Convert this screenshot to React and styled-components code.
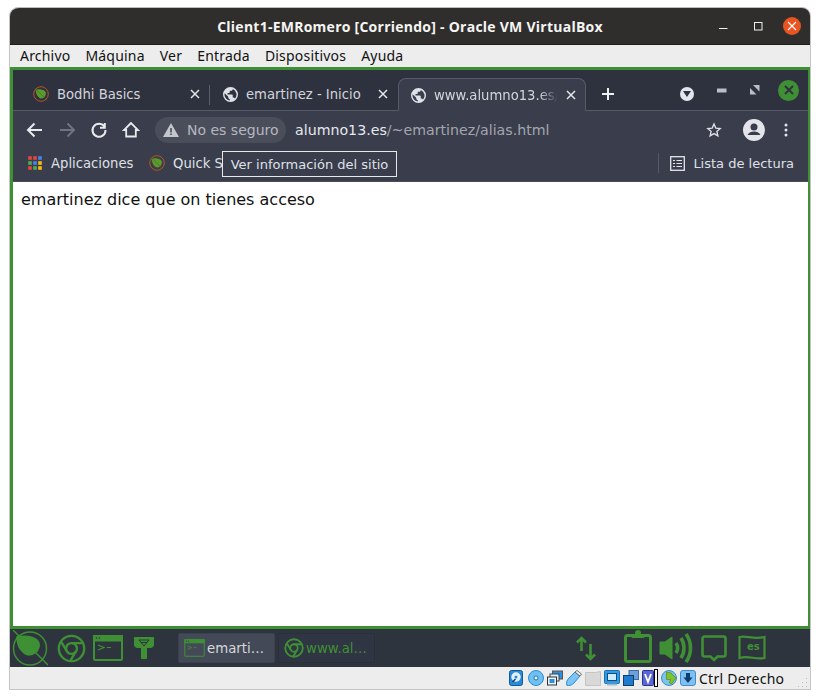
import React from 'react';
import styled, { createGlobalStyle } from 'styled-components';

const green = '#3f9035';

const GlobalStyle = createGlobalStyle`
  html, body { margin: 0; padding: 0; background: #ffffff; }
  body { font-family: "DejaVu Sans", sans-serif; }
`;

const Leaf = ({ size = 16 }) => (
  <svg width={size} height={size} viewBox="0 0 16 16">
    <circle cx="8" cy="8" r="7.3" fill="none" stroke="#b5561f" strokeWidth="1" />
    <path d="M2.600 3.800c3.400-1 8.200-.6 10 2.200 1 1.900-.6 5.500-3.300 6.300C5.600 13 3 8.800 2.600 3.800z" fill="#5d9a2c" />
    <path d="M1.500 2l13 12.500" stroke="#3d6b22" strokeWidth=".6" />
  </svg>
);

const Globe = () => (
  <svg width="15" height="15" viewBox="2 2 20 20">
    <path fill="#dfe1e8" d="M12 2a10 10 0 1 0 0 20 10 10 0 0 0 0-20zm-1 17.900A8 8 0 0 1 4.200 10.200L9 15v1c0 1.100.9 2 2 2v1.900zm6.900-2.500c-.3-.8-1-1.400-1.900-1.400h-1v-3c0-.6-.4-1-1-1H8v-2h2c.6 0 1-.4 1-1V7h2c1.100 0 2-.9 2-2v-.4a8 8 0 0 1 2.900 12.800z" />
  </svg>
);

const CloseX = () => (
  <svg width="10" height="10" viewBox="0 0 10 10">
    <path d="M1 1l8 8M9 1l-8 8" stroke="#e3e5ea" strokeWidth="1.500" />
  </svg>
);

const NavIcon = ({ d, color = '#e8eaed', width = 2 }) => (
  <svg width="20" height="20" viewBox="0 0 20 20">
    <path d={d} fill="none" stroke={color} strokeWidth={width} />
  </svg>
);

const AppsIcon = () => {
  const colors = ['#e8453c', '#e8453c', '#4285f4', '#4caf50', '#4285f4', '#fbbc05', '#e8453c', '#4caf50', '#fbbc05'];
  return (
    <svg width="14" height="14" viewBox="0 0 14 14">
      {colors.map((c, i) => (
        <rect key={i} x={(i % 3) * 5 + 0.2} y={Math.floor(i / 3) * 5 + 0.2} width="3.600" height="3.600" fill={c} />
      ))}
    </svg>
  );
};

const ChromeRing = ({ size, sw = 2.600 }) => (
  <svg width={size} height={size} viewBox="0 0 32 32" fill="none" stroke={green} strokeWidth={sw}>
    <circle cx="16" cy="16" r="14" />
    <circle cx="16" cy="16" r="6" />
    <path d="M16 10h13M10.800 19L4.500 8.500M21 19l-6.500 11" />
  </svg>
);

const TerminalIcon = ({ w, h, sw = 2 }) => (
  <svg width={w} height={h} viewBox="0 0 30 26" fill="none" stroke={green} strokeWidth={sw}>
    <rect x="1" y="1" width="28" height="24" rx="1" />
    <rect x="1" y="1" width="28" height="4.500" fill={green} />
    <circle cx="3.500" cy="3" r=".8" fill="#2e343e" stroke="none" />
    <circle cx="6.500" cy="3" r=".8" fill="#2e343e" stroke="none" />
    <path d="M5 10l6 2.500-6 2.500M14 12.500h4" strokeWidth="1.200" />
  </svg>
);

const Tabs = [
  { title: 'Bodhi Basics', icon: <Leaf />, pad: 10 },
  { title: 'emartinez - Inicio', icon: <Globe />, pad: 11 },
  { title: 'www.alumno13.es/~emartinez/alias.html', icon: <Globe />, pad: 11, active: true },
];

const App = () => (
  <>
    <GlobalStyle />
    <Page>
      <Window>
        <TitleBar>
          <Title>Client1-EMRomero [Corriendo] - Oracle VM VirtualBox</Title>
          <WindowControls>
            <MinimizeLine>
              <svg width="10" height="10" viewBox="0 0 10 10"><path d="M0 7.500h8.500" stroke="#f0efec" strokeWidth="1" /></svg>
            </MinimizeLine>
            <svg width="10" height="10" viewBox="0 0 10 10"><rect x="1.500" y="1.500" width="7.500" height="7.500" fill="none" stroke="#f0efec" strokeWidth="1" /></svg>
            <CloseCircle>
              <svg width="10" height="10" viewBox="0 0 10 10"><path d="M1 1l8 8M9 1l-8 8" stroke="#fff" strokeWidth="1.100" /></svg>
            </CloseCircle>
          </WindowControls>
        </TitleBar>
        <MenuBar>
          {['Archivo', 'Máquina', 'Ver', 'Entrada', 'Dispositivos', 'Ayuda'].map((m) => (
            <MenuItem key={m}>{m}</MenuItem>
          ))}
        </MenuBar>
        <Guest>
          <TabStrip>
            {Tabs.map((t, i) => (
              <Tab key={t.title} $active={t.active} $divider={i === 0} $pad={t.pad}>
                <TabIcon>{t.icon}</TabIcon>
                <TabTitle $active={t.active}>{t.title}</TabTitle>
                <TabClose><CloseX /></TabClose>
              </Tab>
            ))}
            <NewTab>
              <svg width="14" height="14" viewBox="0 0 14 14"><path d="M7 1v12M1 7h12" stroke="#eef0f4" strokeWidth="2" /></svg>
            </NewTab>
            <StripControls>
              <DownCircle>
                <svg width="8" height="6" viewBox="0 0 8 6"><path d="M0 0h8L4 6z" fill="#2f3340" /></svg>
              </DownCircle>
              <svg width="10" height="5" viewBox="0 0 10 5"><rect width="9.500" height="4" y=".5" fill="#bcbec6" /></svg>
              <svg width="10" height="10" viewBox="0 0 10 10"><path d="M3 0h6.500v6.500zM0 3l6.500 6.500H0z" fill="#bcbec6" /></svg>
              <GreenClose>
                <svg width="10" height="10" viewBox="0 0 10 10"><path d="M1 1l8 8M9 1l-8 8" stroke="#2f3340" strokeWidth="2" /></svg>
              </GreenClose>
            </StripControls>
          </TabStrip>
          <Toolbar>
            <NavButton><NavIcon d="M17 10H4M9.500 3.500L3 10l6.500 6.500" /></NavButton>
            <NavButton><NavIcon d="M3 10h13M10.500 3.500L17 10l-6.500 6.500" color="#71747f" /></NavButton>
            <NavButton><NavIcon d="M15.300 6.500A6.500 6.500 0 1 0 16.500 10M15.800 3v4.800H11" /></NavButton>
            <NavButton><NavIcon d="M10 3L3 10h2.200v6.500h9.600V10H17z" width={1.800} /></NavButton>
            <SecurityPill>
              <svg width="16" height="14" viewBox="0 0 16 14">
                <path d="M8 0l8 14H0z" fill="#c4c6cc" />
                <path d="M7.200 5h1.600v4.500H7.200zM7.200 10.500h1.600V12H7.200z" fill="#4a4e5b" />
              </svg>
              <PillText>No es seguro</PillText>
            </SecurityPill>
            <Url>alumno13.es<UrlRest>/~emartinez/alias.html</UrlRest></Url>
            <ToolbarRight>
              <svg width="16" height="16" viewBox="0 0 24 24"><path d="M12 3l2.700 6.100 6.600.7-5 4.400 1.500 6.500L12 17.400l-5.800 3.300 1.500-6.500-5-4.400 6.600-.7z" fill="none" stroke="#dfe1e6" strokeWidth="2" /></svg>
              <Avatar>
                <svg width="22" height="22" viewBox="0 0 22 22">
                  <circle cx="11" cy="11" r="11" fill="#e3e5ea" />
                  <circle cx="11" cy="8" r="3.500" fill="#3a3d4b" />
                  <path d="M4.500 16c1-2.500 4-3.500 6.500-3.500s5.500 1 6.500 3.500z" fill="#3a3d4b" />
                </svg>
              </Avatar>
              <svg width="4" height="14" viewBox="0 0 4 14" fill="#e3e5ea"><circle cx="2" cy="2" r="1.500" /><circle cx="2" cy="7" r="1.500" /><circle cx="2" cy="12" r="1.500" /></svg>
            </ToolbarRight>
          </Toolbar>
          <BookmarkBar>
            <Bookmark $width={121} $gap={9}><AppsIcon /><span>Aplicaciones</span></Bookmark>
            <Bookmark $width={74} $gap={8}><Leaf /><span>Quick S</span></Bookmark>
            <Tooltip>Ver información del sitio</Tooltip>
            <ReadingList>
              <svg width="15" height="15" viewBox="0 0 15 15" fill="none" stroke="#e3e5ea">
                <rect x=".7" y=".7" width="13.600" height="13.600" strokeWidth="1.300" />
                <path d="M3 4.500h2M6.500 4.500H12M3 7.500h2M6.500 7.500H12M3 10.500h2M6.500 10.500H12" strokeWidth="1.200" />
              </svg>
              <span>Lista de lectura</span>
            </ReadingList>
          </BookmarkBar>
          <Content>emartinez dice que on tienes acceso</Content>
          <GreenLine />
        </Guest>
        <BodhiPanel>
          <PanelIcon $margin="0 9px 0 2px">
            <svg width="36" height="36" viewBox="0 0 36 36" fill="none" stroke={green} strokeWidth="1.500">
              <circle cx="18" cy="18.500" r="16.500" />
              <path d="M5 7c6-1 15-1 20 3 4 4 2 10-2 13-3 2-8 3-11 0C7 19 5 13 5 7z" fill={green} />
              <path d="M1 0l35 35" />
            </svg>
          </PanelIcon>
          <PanelIcon $margin="0 7px 0 0"><ChromeRing size={29} /></PanelIcon>
          <PanelIcon $margin="0 11px 0 0"><TerminalIcon w={30} h={26} /></PanelIcon>
          <PanelIcon $margin="0 24px 0 0">
            <svg width="20" height="22" viewBox="0 0 20 22">
              <path d="M0 1a1 1 0 0 1 1-1h18a1 1 0 0 1 1 1v7a4 4 0 0 1-4 3h-3v9a2 2 0 0 1-6 0v-9H4a4 4 0 0 1-4-3z" fill={green} />
              <path d="M5 3h10L10 9zM7 5.500h6" fill="none" stroke="#2e343e" strokeWidth="1" />
            </svg>
          </PanelIcon>
          <TaskButton $active>
            <TerminalIcon w={21} h={18} sw={1.500} />
            <TaskLabel $active>emarti…</TaskLabel>
          </TaskButton>
          <TaskButton>
            <ChromeRing size={20} sw={3} />
            <TaskLabel>www.al…</TaskLabel>
          </TaskButton>
          <PanelRight>
            <PanelIcon $margin="0 28px 0 0">
              <svg width="20" height="25" viewBox="0 0 20 25" fill="none" stroke={green} strokeWidth="2.600">
                <path d="M5.500 15V2M1 6.500l4.500-4.500 4.500 4.500M14.500 8v15M10 18.500l4.500 4.500 4.500-4.500" />
              </svg>
            </PanelIcon>
            <PanelIcon $margin="0 7px 3px 0">
              <svg width="28" height="33" viewBox="0 0 28 33" fill="none" stroke={green} strokeWidth="3">
                <rect x="1.500" y="5.500" width="25" height="26" rx="2" />
                <path d="M8 4.500h12v3H8z" fill={green} strokeWidth="1" />
                <circle cx="14" cy="3" r="3" fill={green} stroke="none" />
              </svg>
            </PanelIcon>
            <PanelIcon $margin="0 8px 0 0">
              <svg width="34" height="32" viewBox="0 0 34 32" fill="none" stroke={green} strokeWidth="3.600">
                <path d="M1 10h5l7-5v22l-7-5H1z" fill={green} strokeWidth="1" />
                <path d="M17 11c2 3 2 7 0 10M22 6c4 6 4 14 0 20M27 2c6 8 6 20 0 28" />
              </svg>
            </PanelIcon>
            <PanelIcon $margin="0 11px 0 0">
              <svg width="26" height="27" viewBox="0 0 26 27" fill="none" stroke={green} strokeWidth="2.600">
                <path d="M3.500 1.500h19a2 2 0 0 1 2 2v16a2 2 0 0 1-2 2h-6L13 25l-3.500-3.500h-6a2 2 0 0 1-2-2v-16a2 2 0 0 1 2-2z" />
              </svg>
            </PanelIcon>
            <FlagIcon>
              <svg width="28" height="28" viewBox="0 0 28 28" fill="none" stroke={green} strokeWidth="2.200">
                <path d="M1.500 3c7-2 13 3 25 0v21c-9 2-16-3-25 0z" />
              </svg>
              <FlagText>es</FlagText>
            </FlagIcon>
          </PanelRight>
        </BodhiPanel>
        <StatusBar>
          <StatusIcons>
            <StatusSlot>
              <svg width="14" height="16" viewBox="0 0 14 16"><rect x=".5" y=".5" width="13" height="15" rx="2" fill="#2a8ad4" stroke="#0b5b9e" /><circle cx="7" cy="7" r="4.700" fill="#e4f1fb" /><circle cx="7" cy="7" r="1.500" fill="#2a8ad4" /><path d="M3.500 12l3-3" stroke="#0b3e6e" strokeWidth="1.500" /></svg>
            </StatusSlot>
            <StatusSlot>
              <svg width="16" height="16" viewBox="0 0 16 16"><circle cx="8" cy="8" r="7.500" fill="#6fc0f2" stroke="#2d8dcc" /><circle cx="8" cy="8" r="2" fill="#fff" stroke="#1d6fb0" /></svg>
            </StatusSlot>
            <StatusSlot>
              <svg width="16" height="16" viewBox="0 0 16 16"><rect x="5.500" y="1" width="10" height="8" fill="#2f8fdc" stroke="#555" /><rect x="3" y="4" width="9" height="7" fill="#d9ecfa" stroke="#444" /><rect x=".5" y="7" width="9" height="8" fill="#eaf4fc" stroke="#333" /><rect x="2.500" y="9" width="5" height="4" fill="#2f8fdc" /></svg>
            </StatusSlot>
            <StatusSlot>
              <svg width="16" height="16" viewBox="0 0 16 16"><path d="M.8 15.300c-.8-3 .2-5.300 2.200-7.300l6-6 5 4-6 7c-2 2-5 3.300-7.200 2.300z" fill="#7cc4f5" stroke="#2d8dcc" /><path d="M9 2l2-1.500 4.500 3.500-1.500 2z" fill="#f4f4f4" stroke="#555" strokeWidth=".8" /></svg>
            </StatusSlot>
            <StatusSlot>
              <svg width="16" height="16" viewBox="0 0 16 16"><path d="M.5 2.500h10l5-1v14H.5z" fill="#d8d8d8" stroke="#c4c4c4" /></svg>
            </StatusSlot>
            <StatusSlot>
              <svg width="16" height="16" viewBox="0 0 16 16"><rect x=".5" y=".5" width="15" height="13" rx="1" fill="#2f9be6" stroke="#1f6fae" /><rect x="3.500" y="3.500" width="9" height="7" fill="#cfeafd" stroke="#0d4e85" /><rect x="3" y="13.500" width="10" height="2" fill="#9cb7cc" /></svg>
            </StatusSlot>
            <StatusSlot>
              <svg width="16" height="16" viewBox="0 0 16 16"><rect x="6" y=".5" width="9.500" height="9" fill="#6d9fd9" stroke="#3f6da5" /><rect x=".5" y="5.500" width="10" height="10" fill="#1d7cd0" stroke="#123e66" /></svg>
            </StatusSlot>
            <StatusSlot>
              <svg width="12" height="16" viewBox="0 0 12 16"><rect x=".5" y=".5" width="11" height="15" rx="1" fill="#5b67d6" stroke="#2b3390" /><path d="M3 4l3 8 3-8" fill="none" stroke="#fff" strokeWidth="1.800" /></svg>
              <Caret />
            </StatusSlot>
            <StatusSlot>
              <svg width="16" height="16" viewBox="0 0 16 16"><circle cx="8" cy="8" r="7.500" fill="#7fc1ea" stroke="#3e90c9" /><path d="M5.500 2l4.500 1 5 5-4.500 6-2-1 1-3.500H5.500V6.500z" fill="#7fc42c" stroke="#4d8c14" strokeWidth=".7" /></svg>
            </StatusSlot>
            <StatusSlot>
              <svg width="16" height="16" viewBox="0 0 16 16"><rect x=".5" y=".5" width="15" height="15" rx="2.500" fill="#7fc0ef" stroke="#3d8ccc" /><path d="M6 3h4v4.500h2.500L8 13 3.500 7.500H6z" fill="#0d3e73" /></svg>
            </StatusSlot>
          </StatusIcons>
          <StatusText>Ctrl Derecho</StatusText>
          <Grip>
            <svg width="10" height="10" viewBox="0 0 10 10" fill="#b9b9b9">
              {[[8, 0], [4, 4], [8, 4], [0, 8], [4, 8], [8, 8]].map(([x, y]) => <rect key={`${x}${y}`} x={x} y={y} width="1" height="1" />)}
            </svg>
          </Grip>
        </StatusBar>
      </Window>
    </Page>
  </>
);

export default App;

const Page = styled.div`
  width: 820px;
  height: 699px;
  box-sizing: border-box;
  padding: 7px 9px 9px 10px;
  overflow: hidden;
`;

const Window = styled.div`
  width: 801px;
  height: 683px;
  box-sizing: border-box;
  display: flex;
  flex-direction: column;
  border-radius: 9px 9px 0 0;
  border: 1px solid #c4c4c4;
  border-left-width: 0;
  border-top-color: #bdbdbd;
  box-shadow: -1px 0 0 #c4c4c4;
  background: #ededed;
  overflow: hidden;
`;

const TitleBar = styled.div`
  height: 37px;
  flex: none;
  position: relative;
  display: flex;
  align-items: center;
  justify-content: center;
  background: #302e2d;
  border-bottom: 1px solid #1f1e1d;
  box-sizing: border-box;
`;

const Title = styled.div`
  font-family: "Open Sans", sans-serif;
  font-weight: 700;
  font-size: 14px;
  letter-spacing: 0.25px;
  color: #f5f5f3;
`;

const WindowControls = styled.div`
  position: absolute;
  right: 9px;
  top: 9px;
  display: flex;
  align-items: center;
  gap: 20px;
`;

const MinimizeLine = styled.span`
  display: flex;
  margin-right: 4px;
`;

const CloseCircle = styled.div`
  width: 18px;
  height: 18px;
  border-radius: 50%;
  background: #e95420;
  display: flex;
  align-items: center;
  justify-content: center;
`;

const MenuBar = styled.div`
  height: 22px;
  flex: none;
  box-sizing: border-box;
  padding: 0 0 2px 10px;
  display: flex;
  align-items: center;
  gap: 15px;
  background: #ededed;
`;

const MenuItem = styled.span`
  font-family: "Noto Sans", sans-serif;
  font-size: 14px;
  letter-spacing: 0.2px;
  color: #111;
`;

const Guest = styled.div`
  flex: 1;
  min-height: 0;
  display: flex;
  flex-direction: column;
  border: 3px solid ${green};
  border-bottom: none;
  border-right-width: 2px;
`;

const TabStrip = styled.div`
  height: 41px;
  flex: none;
  display: flex;
  align-items: flex-end;
  padding-left: 9px;
  background: #2e323f;
  border-bottom: 1px solid #565a68;
  box-sizing: border-box;
`;

const Tab = styled.div`
  width: 188px;
  height: 33px;
  flex: none;
  box-sizing: border-box;
  display: flex;
  align-items: center;
  padding: 0 9px 0 ${(p) => p.$pad}px;
  color: #d3d5dc;
  border-radius: 8px 8px 0 0;
  background: ${(p) => (p.$active ? '#3a3d4c' : 'transparent')};
  border: 1px solid ${(p) => (p.$active ? '#565a68' : 'transparent')};
  border-bottom: none;
  margin-bottom: ${(p) => (p.$active ? '-1px' : '0')};
  position: relative;
  ${(p) => p.$divider && `
    &::after {
      content: '';
      position: absolute;
      right: -1px;
      top: 7px;
      height: 20px;
      width: 1px;
      background: #5a5e6b;
    }
  `}
`;

const TabIcon = styled.span`
  width: 16px;
  height: 16px;
  flex: none;
  margin-right: 8px;
  display: flex;
  align-items: center;
  justify-content: center;
`;

const TabTitle = styled.span`
  flex: 1;
  min-width: 0;
  white-space: nowrap;
  overflow: hidden;
  font-size: 13.2px;
  ${(p) => p.$active && `
    -webkit-mask-image: linear-gradient(to right, #000 85%, transparent 100%);
    mask-image: linear-gradient(to right, #000 85%, transparent 100%);
  `}
`;

const TabClose = styled.span`
  width: 10px;
  height: 10px;
  flex: none;
  margin-left: 8px;
  display: flex;
`;

const NewTab = styled.div`
  width: 14px;
  height: 14px;
  margin: 0 0 9px 15px;
  display: flex;
`;

const StripControls = styled.div`
  margin-left: auto;
  height: 100%;
  padding-right: 9px;
  display: flex;
  align-items: center;
  gap: 23px;
`;

const DownCircle = styled.div`
  width: 14px;
  height: 14px;
  border-radius: 50%;
  background: #e3e5ee;
  display: flex;
  align-items: center;
  justify-content: center;
  position: relative;
  top: 4px;
`;

const GreenClose = styled.div`
  width: 21px;
  height: 21px;
  margin-left: -5px;
  border-radius: 50%;
  background: ${green};
  display: flex;
  align-items: center;
  justify-content: center;
`;

const Toolbar = styled.div`
  height: 37px;
  flex: none;
  display: flex;
  align-items: center;
  padding-left: 6px;
  background: #3a3d4c;
`;

const NavButton = styled.div`
  width: 32px;
  height: 32px;
  display: flex;
  align-items: center;
  justify-content: center;
`;

const SecurityPill = styled.div`
  width: 131px;
  height: 26px;
  box-sizing: border-box;
  margin-left: 8px;
  border-radius: 13px;
  background: #4a4e5b;
  display: flex;
  align-items: center;
  gap: 8px;
  padding-left: 8px;
`;

const PillText = styled.span`
  font-size: 14px;
  color: #b5b7c0;
  white-space: nowrap;
`;

const Url = styled.div`
  margin-left: 9px;
  font-size: 14.2px;
  color: #e6e8ec;
  white-space: nowrap;
`;

const UrlRest = styled.span`
  color: #a3a5ae;
`;

const ToolbarRight = styled.div`
  margin-left: auto;
  padding-right: 20px;
  display: flex;
  align-items: center;
`;

const Avatar = styled.div`
  display: flex;
  margin: 0 19px 0 21px;
`;

const BookmarkBar = styled.div`
  height: 34px;
  flex: none;
  position: relative;
  display: flex;
  align-items: center;
  padding: 0 0 3px 15px;
  font-size: 13.2px;
  color: #dfe1e7;
  background: #3a3d4c;
  border-bottom: 1px solid #4a4e5b;
  box-sizing: border-box;
`;

const Bookmark = styled.div`
  width: ${(p) => p.$width}px;
  display: flex;
  align-items: center;
  gap: ${(p) => p.$gap}px;
  white-space: nowrap;
  & > svg { flex: none; }
`;

const Tooltip = styled.div`
  position: absolute;
  left: 209px;
  top: 3px;
  width: 175px;
  height: 26px;
  box-sizing: border-box;
  border: 1px solid #e6e8ec;
  background: #3a3d4c;
  color: #dfe1e7;
  font-size: 13px;
  display: flex;
  align-items: center;
  justify-content: center;
  white-space: nowrap;
`;

const ReadingList = styled.div`
  margin-left: auto;
  padding: 0 14px 0 11px;
  height: 20px;
  display: flex;
  align-items: center;
  gap: 8px;
  font-size: 13px;
  border-left: 1px solid #565a68;
`;

const Content = styled.div`
  flex: 1;
  background: #ffffff;
  padding: 8px;
  font-size: 16px;
  color: #111;
`;

const GreenLine = styled.div`
  height: 3px;
  flex: none;
  margin: 0 -3px;
  background: ${green};
`;

const BodhiPanel = styled.div`
  height: 38px;
  flex: none;
  display: flex;
  align-items: center;
  background: #2e343e;
`;

const PanelIcon = styled.div`
  display: flex;
  flex: none;
  margin: ${(p) => p.$margin};
`;

const TaskButton = styled.div`
  width: 97px;
  height: 30px;
  flex: none;
  box-sizing: border-box;
  margin-right: 3px;
  padding-left: 5px;
  display: flex;
  align-items: center;
  gap: 2px;
  border-radius: 2px;
  background: ${(p) => (p.$active ? '#444958' : '#2f3542')};
  border: 1px solid ${(p) => (p.$active ? '#3c4150' : '#2a2f3a')};
`;

const TaskLabel = styled.span`
  font-size: 13.3px;
  color: ${(p) => (p.$active ? '#d5d7dc' : green)};
  white-space: nowrap;
`;

const PanelRight = styled.div`
  margin-left: auto;
  padding-right: 44px;
  display: flex;
  align-items: center;
`;

const FlagIcon = styled.div`
  position: relative;
  width: 28px;
  height: 28px;
  display: flex;
`;

const FlagText = styled.span`
  position: absolute;
  left: 9px;
  top: 7px;
  font-size: 10px;
  font-weight: 700;
  color: ${green};
`;

const StatusBar = styled.div`
  height: 22px;
  flex: none;
  display: flex;
  align-items: center;
  padding-left: 499px;
  background: #ededed;
  position: relative;
`;

const StatusIcons = styled.div`
  display: flex;
  align-items: center;
  gap: 3px;
`;

const StatusSlot = styled.span`
  width: 16px;
  height: 18px;
  display: flex;
  align-items: center;
`;

const Caret = styled.span`
  width: 2px;
  height: 16px;
  flex: none;
  border: 1px solid #000;
  background: #fff;
`;

const StatusText = styled.span`
  margin-left: 3px;
  font-family: "Noto Sans", sans-serif;
  font-size: 14px;
  letter-spacing: 0.25px;
  color: #111;
`;

const Grip = styled.span`
  position: absolute;
  right: 2px;
  bottom: 1px;
  display: flex;
`;
